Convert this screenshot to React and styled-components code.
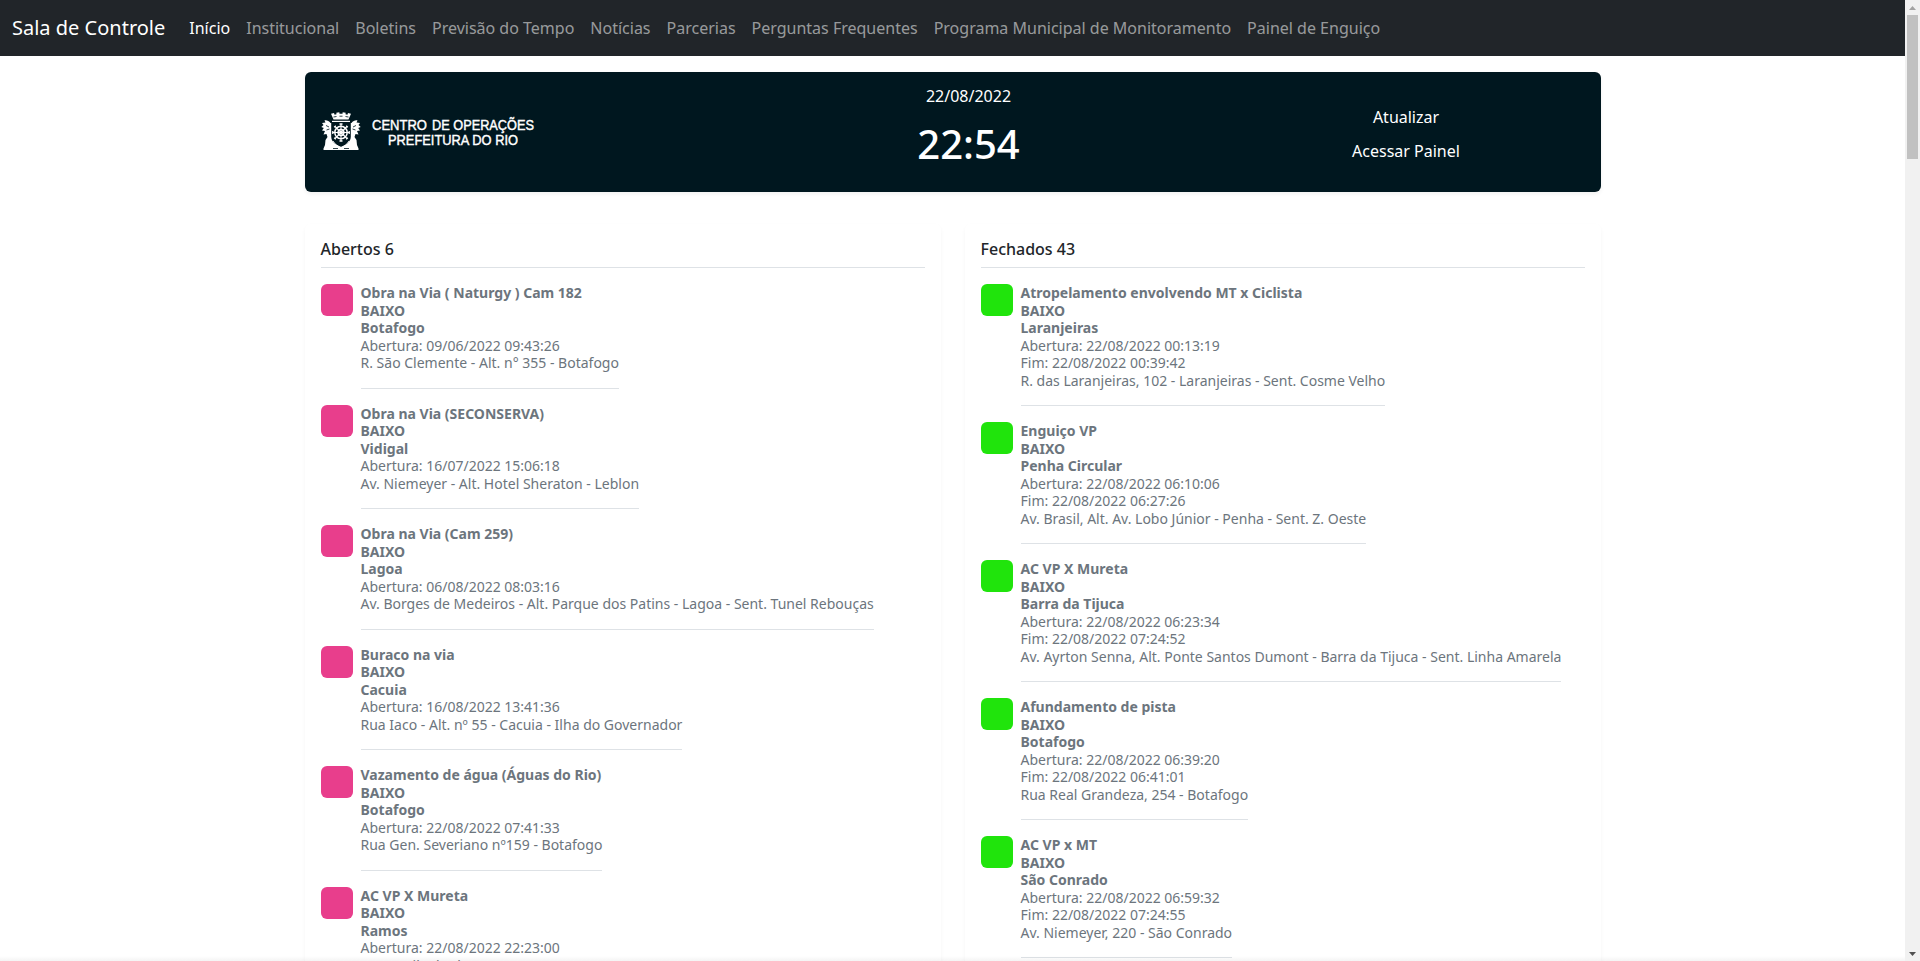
import React from "react";
import styled, { createGlobalStyle } from "styled-components";

const GlobalStyle = createGlobalStyle`
  *, *::before, *::after { box-sizing: border-box; }
  body {
    margin: 0;
    font-family: "Noto Sans", "Liberation Sans", sans-serif;
    font-size: 16px;
    line-height: 1.5;
    color: #212529;
    background: #fff;
  }
`;

const Shell = styled.div`
  display: flex;
  height: 961px;
  overflow: hidden;
`;

const Page = styled.div`
  position: relative;
  flex: 1;
  height: 100%;
  overflow: hidden;
`;

const BottomFade = styled.div`
  position: absolute;
  left: 0;
  right: 0;
  bottom: 0;
  height: 5px;
  background: linear-gradient(rgba(0, 0, 0, 0), rgba(0, 0, 0, 0.045));
`;

const Navbar = styled.nav`
  display: flex;
  align-items: center;
  height: 56px;
  padding: 0 12px;
  background: #212529;
`;

const Brand = styled.a`
  margin-right: 16px;
  font-size: 20px;
  color: #fff;
  white-space: nowrap;
`;

const NavLink = styled.a`
  padding: 8px;
  white-space: nowrap;
  color: ${({ $active }) => ($active ? "#fff" : "rgba(255, 255, 255, 0.55)")};
`;

const Container = styled.main`
  width: 1296px;
  margin: 16px auto 0;
`;

const Banner = styled.header`
  display: flex;
  align-items: center;
  height: 120px;
  border-radius: 6px;
  background: #00171f;
  color: #fff;
  box-shadow: 0 2px 4px rgba(0, 0, 0, 0.06);
`;

const LogoCell = styled.div`
  display: flex;
  width: 445px;
  padding-left: 16px;
`;

const ClockCell = styled.div`
  width: 438px;
  text-align: center;
`;

const DateText = styled.div`
  margin-bottom: 12px;
  line-height: 24px;
`;

const TimeText = styled.div`
  margin-bottom: 12px;
  font-size: 40px;
  font-weight: 500;
  line-height: 48px;
`;

const ActionCell = styled.div`
  display: flex;
  flex: 1;
  flex-direction: column;
  align-items: center;
  gap: 10px;
  padding: 4px 0 0 24px;
`;

const Action = styled.a`
  line-height: 24px;
`;

const Columns = styled.div`
  display: grid;
  grid-template-columns: 1fr 1fr;
  gap: 24px;
  margin-top: 32px;
`;

const Card = styled.section`
  padding: 16px;
  border-radius: 6px;
  box-shadow: 0 2px 4px rgba(0, 0, 0, 0.04);
`;

const CardTitle = styled.h6`
  margin: 0;
  padding-bottom: 8px;
  border-bottom: 1px solid #dee2e6;
  font-size: 16px;
  font-weight: 500;
  line-height: 19.2px;
`;

const Item = styled.div`
  display: flex;
  align-items: flex-start;
  padding-top: 16px;
`;

const Swatch = styled.span`
  flex: none;
  width: 32px;
  height: 32px;
  margin-right: 8px;
  border-radius: 6px;
  background: ${({ $color }) => $color};
`;

const Details = styled.div`
  padding-bottom: 16px;
  border-bottom: 1px solid #dee2e6;
  font-size: 14px;
  line-height: 17.5px;
  color: #6c757d;
  white-space: nowrap;
`;

const Line = styled.div`
  font-weight: ${({ $strong }) => ($strong ? 700 : 400)};
`;

const Scrollbar = styled.div`
  display: flex;
  flex: none;
  flex-direction: column;
  align-items: center;
  width: 15px;
  background: #f1f1f1;
`;

const ArrowBox = styled.div`
  display: flex;
  align-items: center;
  justify-content: center;
  width: 15px;
  height: 15px;
`;

const Thumb = styled.div`
  width: 11px;
  height: 144px;
  background: #c1c1c1;
`;

const Track = styled.div`
  flex: 1;
`;

const LogoSvg = styled.svg`
  display: block;
  overflow: visible;
`;

const links = [
  "Início",
  "Institucional",
  "Boletins",
  "Previsão do Tempo",
  "Notícias",
  "Parcerias",
  "Perguntas Frequentes",
  "Programa Municipal de Monitoramento",
  "Painel de Enguiço",
];

const openItems = [
  ["Obra na Via ( Naturgy ) Cam 182", "Botafogo", "09/06/2022 09:43:26", null, "R. São Clemente - Alt. n° 355 - Botafogo"],
  ["Obra na Via (SECONSERVA)", "Vidigal", "16/07/2022 15:06:18", null, "Av. Niemeyer - Alt. Hotel Sheraton - Leblon"],
  ["Obra na Via (Cam 259)", "Lagoa", "06/08/2022 08:03:16", null, "Av. Borges de Medeiros - Alt. Parque dos Patins - Lagoa - Sent. Tunel Rebouças"],
  ["Buraco na via", "Cacuia", "16/08/2022 13:41:36", null, "Rua Iaco - Alt. nº 55 - Cacuia - Ilha do Governador"],
  ["Vazamento de água (Águas do Rio)", "Botafogo", "22/08/2022 07:41:33", null, "Rua Gen. Severiano nº159 - Botafogo"],
  ["AC VP X Mureta", "Ramos", "22/08/2022 22:23:00", null, "Av. Brasil, Alt. da Rua Joana - Ramos"],
];

const closedItems = [
  ["Atropelamento envolvendo MT x Ciclista", "Laranjeiras", "22/08/2022 00:13:19", "22/08/2022 00:39:42", "R. das Laranjeiras, 102 - Laranjeiras - Sent. Cosme Velho"],
  ["Enguiço VP", "Penha Circular", "22/08/2022 06:10:06", "22/08/2022 06:27:26", "Av. Brasil, Alt. Av. Lobo Júnior - Penha - Sent. Z. Oeste"],
  ["AC VP X Mureta", "Barra da Tijuca", "22/08/2022 06:23:34", "22/08/2022 07:24:52", "Av. Ayrton Senna, Alt. Ponte Santos Dumont - Barra da Tijuca - Sent. Linha Amarela"],
  ["Afundamento de pista", "Botafogo", "22/08/2022 06:39:20", "22/08/2022 06:41:01", "Rua Real Grandeza, 254 - Botafogo"],
  ["AC VP x MT", "São Conrado", "22/08/2022 06:59:32", "22/08/2022 07:24:55", "Av. Niemeyer, 220 - São Conrado"],
];

function Logo() {
  return (
    <LogoSvg width="220" height="44" viewBox="0 0 220 44" fill="#fff">
      <g transform="translate(0 1)">
        <path d="M10 2.800l3-.8 .6 1.700 1.900-.4-.2-1.600 3-.4 .2 1.500h3l.2-1.500 3 .4-.2 1.600 1.900 .4 .6-1.700 3 .8-2.500 5.700H12.500z" />
        <path d="M9.500 12C8 10 5.500 9 3.500 9.500l1 2-3.500 .5 1.500 2L.300 16l2.500 1L1 19.500l3 .500-1.500 3.500 3-.500 1 3-2 3-.500 5-1.500 3.500V39h35v-1.500L36 34l-.500-5-2-3 1-3 3 .500L36 20l3-.500L37.200 17l2.500-1-2.200-2 1.500-2-3.500-.500 1-2C34.500 9 32 10 30.500 12z" />
        <path d="M10.200 9.500h19.600v16c0 5-4 8-9.800 10.500-5.800-2.500-9.800-5.500-9.800-10.500z" fill="#00171f" />
        <path d="M11 9.800h18v1.200h-18z" />
        <circle cx="20" cy="21.500" r="6.200" fill="none" stroke="#fff" strokeWidth="1.500" />
        <circle cx="20" cy="21.500" r="3" fill="none" stroke="#fff" strokeWidth="1.300" />
        <path d="M20 13v17M11.500 21.500h17M14 15.500l12 12M26 15.500l-12 12" stroke="#fff" strokeWidth="1.100" />
        <path d="M18.500 13h3M18.500 30h3M11.800 20v3M28.200 20v3M13.200 16.300l1.600-1.600M25.200 14.700l1.600 1.600M13.200 26.700l1.600 1.600M25.200 28.300l1.600-1.600" stroke="#fff" strokeWidth="1.300" />
        <path d="M12 30c2 3.500 4.500 5 8 6.500 3.500-1.500 6-3 8-6.500" fill="none" stroke="#fff" strokeWidth=".9" />
        <path d="M5 14.500l3 1.500M5.500 19l3-1M35 14.500l-3 1.500M34.500 19l-3-1M12 37.500h5M23 37.500h5" stroke="#00171f" strokeWidth=".8" />
        <path d="M12.500 6l3-.500M18.500 5.200h3M24.500 5.500l3 .500" stroke="#00171f" strokeWidth=".8" />
      </g>
      <g fontFamily="Liberation Sans, Arial, sans-serif" fontSize="13.800" stroke="#fff" strokeWidth=".4">
        <text x="51" y="19.500" textLength="55" lengthAdjust="spacingAndGlyphs">CENTRO</text>
        <text x="111" y="19.500" textLength="102" lengthAdjust="spacingAndGlyphs">DE OPERAÇÕES</text>
        <text x="67" y="35" textLength="130" lengthAdjust="spacingAndGlyphs">PREFEITURA DO RIO</text>
      </g>
    </LogoSvg>
  );
}

function Panel({ title, color, items }) {
  return (
    <Card>
      <CardTitle>{title}</CardTitle>
      {items.map(([name, place, start, end, address]) => (
        <Item key={start}>
          <Swatch $color={color} />
          <Details>
            <Line $strong>{name}</Line>
            <Line $strong>BAIXO</Line>
            <Line $strong>{place}</Line>
            <Line>Abertura: {start}</Line>
            {end && <Line>Fim: {end}</Line>}
            <Line>{address}</Line>
          </Details>
        </Item>
      ))}
    </Card>
  );
}

export default function App() {
  return (
    <Shell>
      <GlobalStyle />
      <Page>
        <Navbar>
          <Brand>Sala de Controle</Brand>
          {links.map((label, i) => (
            <NavLink key={label} $active={i === 0}>{label}</NavLink>
          ))}
        </Navbar>
        <Container>
          <Banner>
            <LogoCell><Logo /></LogoCell>
            <ClockCell>
              <DateText>22/08/2022</DateText>
              <TimeText>22:54</TimeText>
            </ClockCell>
            <ActionCell>
              <Action>Atualizar</Action>
              <Action>Acessar Painel</Action>
            </ActionCell>
          </Banner>
          <Columns>
            <Panel title="Abertos 6" color="#e83e8c" items={openItems} />
            <Panel title="Fechados 43" color="#20e40c" items={closedItems} />
          </Columns>
        </Container>
        <BottomFade />
      </Page>
      <Scrollbar>
        <ArrowBox>
          <svg width="7" height="4" viewBox="0 0 7 4"><path d="M0 4L3.500 0 7 4z" fill="#a3a3a3" /></svg>
        </ArrowBox>
        <Thumb />
        <Track />
        <ArrowBox>
          <svg width="7" height="4" viewBox="0 0 7 4"><path d="M0 0h7L3.500 4z" fill="#505050" /></svg>
        </ArrowBox>
      </Scrollbar>
    </Shell>
  );
}
